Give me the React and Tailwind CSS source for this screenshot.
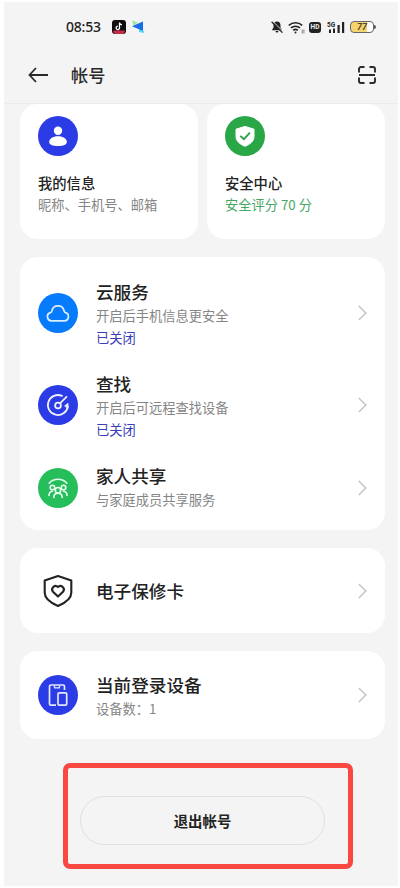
const services = [
  { id: 'cloud', title: '云服务', desc: '开启后手机信息更安全', status: '已关闭', color: 'bg-[#067bfb]', icon: CloudIcon },
  { id: 'find', title: '查找', desc: '开启后可远程查找设备', status: '已关闭', color: 'bg-[#2b3ce6]', icon: RadarIcon },
  { id: 'family', title: '家人共享', desc: '与家庭成员共享服务', color: 'bg-[#25be5b]', icon: FamilyIcon },
];

function CloudIcon() {
  return (
    <svg width="40" height="40" viewBox="0 0 40 40" fill="none" stroke="#d9f0ff" strokeWidth="1.7" strokeLinejoin="round">
      <path d="M14.200 27.800h12a4.200 4.200 0 0 0 1.300-8.200c-.9-.3-1.300-.8-1.400-1.600a6.200 6.200 0 0 0-12.200 0c-.1.800-.5 1.300-1.400 1.600a4.200 4.200 0 0 0 1.700 8.200z" />
    </svg>
  );
}

function RadarIcon() {
  return (
    <svg width="40" height="40" viewBox="0 0 40 40" fill="none" stroke="#eef0ff" strokeWidth="1.8" strokeLinecap="round">
      <path d="M24 10.900A10 10 0 1 0 29.800 21.500" />
      <circle cx="20" cy="20.500" r="2.900" />
      <path d="M22.200 18.200l6.300-6.400" />
      <path d="M26.800 20.800l3.200-2.600v4.800z" fill="#eef0ff" strokeWidth="0.800" />
    </svg>
  );
}

function FamilyIcon() {
  return (
    <svg width="40" height="40" viewBox="0 0 40 40" fill="none" stroke="#e6ffee" strokeWidth="1.600" strokeLinecap="round">
      <path d="M11.200 15.200c4.600-5.200 13-5.200 17.600 0" />
      <circle cx="14.500" cy="19.500" r="2.300" />
      <circle cx="25.500" cy="19.500" r="2.300" />
      <circle cx="20" cy="22.200" r="2.700" />
      <path d="M11 27.500c0-2.300 1-4 3.500-4.300M29 27.500c0-2.300-1-4-3.500-4.300" />
      <path d="M15.800 29.500c0-2.500 1.500-4.200 4.200-4.200s4.200 1.700 4.200 4.200" />
    </svg>
  );
}

function PersonIcon() {
  return (
    <svg width="40" height="40" viewBox="0 0 40 40" fill="#fff">
      <circle cx="20" cy="14.700" r="4.200" />
      <path d="M20 20.300c5.400 0 8.800 2.600 8.800 5.700 0 2.900-3.400 4-8.800 4s-8.800-1.100-8.800-4c0-3.100 3.400-5.700 8.800-5.700z" />
    </svg>
  );
}

function ShieldIcon() {
  return (
    <svg width="40" height="40" viewBox="0 0 40 40">
      <path d="M20 10.400l9 2.800v7.300c0 4.700-4 7.800-9 9.800-5-2-9-5.100-9-9.800v-7.300z" fill="#fff" stroke="#fff" strokeWidth="1" strokeLinejoin="round" />
      <path d="M15.300 19.800l3.600 3.400 6-6.600" fill="none" stroke="#29a146" strokeWidth="1.800" />
    </svg>
  );
}

function WarrantyIcon() {
  return (
    <svg width="40" height="40" viewBox="0 0 40 40" fill="none" stroke="#222" strokeWidth="2.100" strokeLinejoin="round">
      <path d="M20 5l13.300 4.500v12.200c0 5.800-5.200 9.800-13.300 13.300-8.100-3.500-13.300-7.500-13.300-13.300V9.500z" />
      <path d="M20 25.600l-5-4.900a3.400 3.400 0 0 1 5-4.600 3.400 3.400 0 0 1 5 4.600z" />
    </svg>
  );
}

function DevicesIcon() {
  return (
    <svg width="40" height="40" viewBox="0 0 40 40" fill="none" stroke="#e4e7ff" strokeWidth="1.700" strokeLinejoin="round">
      <path d="M18 30.200h-5.200c-.8 0-1.300-.5-1.300-1.300V11.300c0-.8.5-1.300 1.300-1.300h12.400c.8 0 1.300.5 1.300 1.300V15" />
      <path d="M16.500 10.500v2.300h5v-2.300" strokeWidth="1.300" />
      <rect x="20" y="17.800" width="8.700" height="12.400" rx="1.200" />
    </svg>
  );
}

function Chevron() {
  return (
    <svg width="10" height="16" viewBox="0 0 10 16" fill="none" stroke="#c6c6c6" strokeWidth="1.600" className="shrink-0">
      <path d="M0.800 1l7 7-7 7" />
    </svg>
  );
}

function StatusBar() {
  return (
    <div className="flex h-[50px] items-center pl-[62px] pr-[22px] text-[#222]">
      <span className="w-9 whitespace-nowrap font-['Noto_Sans'] text-[14px] font-medium leading-none tracking-[-0.200px]">08:53</span>
      <svg width="14" height="14" viewBox="0 0 14 14" className="ml-[10px]">
        <rect width="14" height="14" rx="3" fill="#100c10" />
        <path d="M1 10.500h12c0 2.200-1 3.500-3 3.500H4c-2 0-3-1.300-3-3.500z" fill="#c62c47" />
        <path d="M7.500 2.500v5.300a1.700 1.700 0 1 1-1.700-1.600M7.500 2.700c.3 1.300 1.200 2 2.500 2.100" fill="none" stroke="#fff" strokeWidth="1.300" />
      </svg>
      <svg width="14" height="14" viewBox="0 0 14 14" className="ml-[5px]">
        <path d="M1 0.500l6 2-4.500 3z" fill="#9be99a" />
        <path d="M8 9l5.500 2.500-1 1.500-4.500-1z" fill="#55d8f5" />
        <path d="M12 1.500v9.500L1 6.300z" fill="#176ee8" />
      </svg>
      <div className="ml-auto flex items-center">
        <svg width="12" height="12" viewBox="0 0 12 12">
          <path d="M6 0.500c2.200 0 3.500 1.600 3.500 3.600v2.400l1.400 2.200v0.600H1.100v-0.600l1.400-2.200V4.100C2.500 2.100 3.800.5 6 .5zM4.500 10h3a1.500 1.500 0 0 1-3 0z" fill="#222" />
          <path d="M1.500 0L12 10.500" stroke="#f4f4f4" strokeWidth="1" />
          <path d="M0.600 0.800l10.800 10.800" stroke="#222" strokeWidth="1.300" />
        </svg>
        <svg width="17" height="13" viewBox="0 0 17 13" fill="none" stroke="#222" strokeWidth="1.600" className="ml-[5px]">
          <path d="M0.800 4.300a10 10 0 0 1 13.400 0M3 6.900a6.800 6.800 0 0 1 9 0M5.200 9.400a3.600 3.600 0 0 1 4.600 0" />
          <circle cx="7.500" cy="11.500" r="1" fill="#222" stroke="none" />
          <path d="M14.200 8.500v4M15.900 8.500v4" strokeWidth="0.900" stroke="#777" />
        </svg>
        <span className="ml-1 flex h-[11px] w-3 items-center justify-center rounded-[3px] bg-[#222] font-['Roboto'] text-[6.500px] font-bold leading-none text-[#eee]">HD</span>
        <svg width="18" height="13" viewBox="0 0 18 13" className="ml-[6px]" fill="#222">
          <text x="0" y="5.500" fontSize="6.500" fontWeight="700" fontFamily="Roboto, sans-serif">5G</text>
          <rect x="2" y="8.500" width="2" height="3.500" />
          <rect x="6" y="7.500" width="2" height="4.500" />
          <rect x="10.500" y="4" width="2.200" height="8" />
          <rect x="15" y="1" width="2.200" height="11" />
        </svg>
        <span className="ml-[5px] flex h-3 w-6 items-center justify-center rounded-[4px] border-[1.500px] border-[#66666e] bg-linear-to-r from-[#f5d36e] from-75% to-white to-75% font-['Roboto'] text-[9px] font-bold italic leading-none text-[#55482a]">77</span>
        <span className="h-1 w-[2px] rounded-r bg-[#55555c]" />
      </div>
    </div>
  );
}

function Header() {
  return (
    <header className="flex h-[52px] items-center border-b border-[#ebebeb] pb-[5px] pl-6 pr-[22px] text-[#2a2a2a]">
      <svg width="20" height="16" viewBox="0 0 20 16" fill="none" stroke="currentColor" strokeWidth="1.800">
        <path d="M8 1L1.500 8 8 15M1.500 8H20" />
      </svg>
      <h1 className="ml-[23px] text-[17.200px] font-medium leading-6">帐号</h1>
      <svg width="18" height="18" viewBox="0 0 18 18" fill="none" stroke="currentColor" strokeWidth="1.900" className="ml-auto">
        <path d="M1 6.500V3a2 2 0 0 1 2-2h3.500M11.500 1H15a2 2 0 0 1 2 2v3.500M1 11.500V15a2 2 0 0 0 2 2h3.500M11.500 17H15a2 2 0 0 0 2-2v-3.500M1 9h16" />
      </svg>
    </header>
  );
}

function Row({ icon: Icon, color, title, desc, status, textClass }) {
  return (
    <div className="flex items-center">
      <div className={`size-10 shrink-0 rounded-full ${color || ''}`}>
        <Icon />
      </div>
      <div className={`ml-[18px] flex-1 ${textClass || ''}`}>
        <p className="text-[17.600px] font-medium leading-6 text-[#222]">{title}</p>
        {desc && <p className="text-[13.250px] leading-[23px] text-[#858585]">{desc}</p>}
        {status && <p className="-mb-1 text-[13.250px] leading-[22px] text-[#3840b8]">{status}</p>}
      </div>
      <Chevron />
    </div>
  );
}

function App() {
  return (
    <div className="h-[888px] w-[400px] overflow-hidden bg-white pb-[2px] pl-1 pr-[2px] pt-[2px] font-['Noto_Sans_CJK_SC',sans-serif]">
      <div className="h-full bg-[#f4f4f4]">
        <StatusBar />
        <Header />

        <main className="pl-4 pr-[13px]">
          <div className="grid grid-cols-2 gap-[9px]">
            <section className="h-[135px] rounded-[18px] bg-white pl-[18px] pt-3">
              <div className="size-10 rounded-full bg-[#2b3ce6]">
                <PersonIcon />
              </div>
              <p className="mt-4 text-[14.300px] font-medium leading-[22px] text-[#222]">我的信息</p>
              <p className="text-[13.250px] leading-[22px] text-[#858585]">昵称、手机号、邮箱</p>
            </section>
            <section className="h-[135px] rounded-[18px] bg-white pl-[18px] pt-3">
              <div className="size-10 rounded-full bg-[#29a746]">
                <ShieldIcon />
              </div>
              <p className="mt-4 text-[14.300px] font-medium leading-[22px] text-[#222]">安全中心</p>
              <p className="text-[13.250px] leading-[22px] text-[#45a563]">安全评分 70 分</p>
            </section>
          </div>

          <section className="mt-[18px] flex h-[273px] flex-col gap-[27px] rounded-[18px] bg-white pl-[18px] pr-[17px] pt-[23px]">
            {services.map((item) => (
              <Row key={item.id} {...item} />
            ))}
          </section>

          <section className="mt-[18px] flex h-[85px] flex-col justify-center rounded-[18px] bg-white pl-[18px] pr-[17px]">
            <Row icon={WarrantyIcon} title="电子保修卡" />
          </section>

          <section className="mt-[18px] flex h-[88px] flex-col justify-center rounded-[18px] bg-white pl-[18px] pr-[17px]">
            <Row icon={DevicesIcon} color="bg-[#2b3ce6]" title="当前登录设备" desc="设备数：1" textClass="pt-[3px]" />
          </section>
        </main>

        <div className="ml-[59px] mt-6 h-[106px] w-[290px] rounded-[7px] border-[5px] border-[#fa4741] pl-3 pt-7">
          <button className="h-[49px] w-[245px] rounded-full border border-[#dfdfdf] text-[14.400px] font-bold text-[#222]">退出帐号</button>
        </div>
      </div>
    </div>
  );
}

export default App;
